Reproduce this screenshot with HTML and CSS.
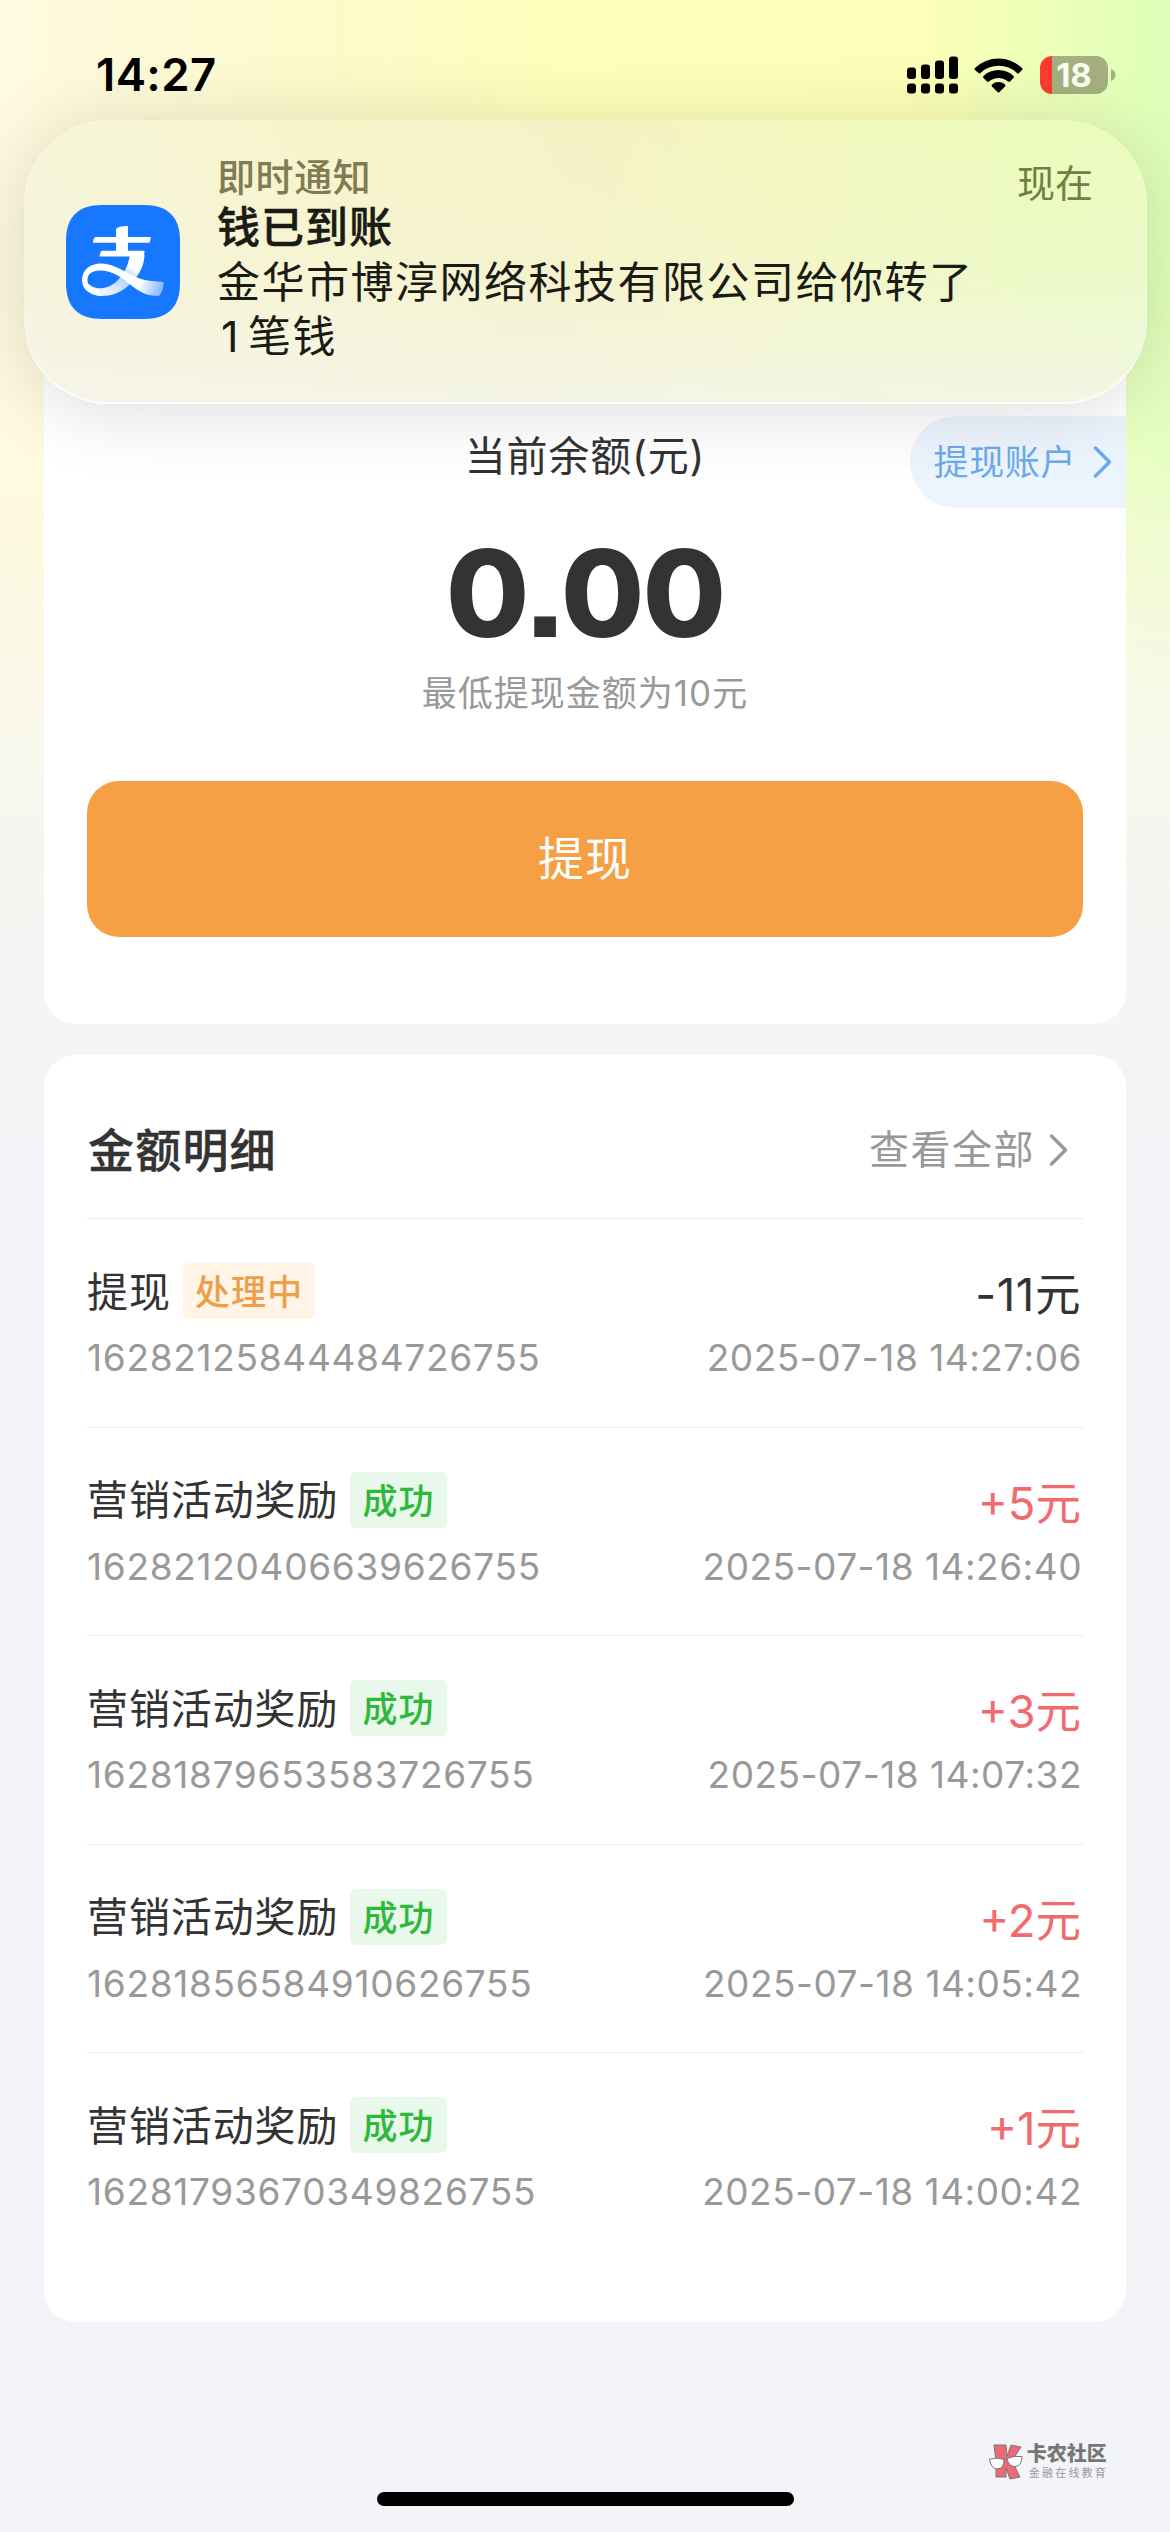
FILE: index.html
```html
<!DOCTYPE html>
<html lang="zh-CN">
<head>
<meta charset="utf-8">
<title>提现</title>
<link rel="stylesheet" href="styles.css">
</head>
<body>
<div class="screen">
  <header class="status-bar">
    <span class="clock">14:27</span>
    <div class="status-icons">
      <svg class="signal" width="52" height="38" viewBox="0 0 52 38">
        <rect x="0" y="11.5" width="9" height="11.5" rx="3"/><rect x="14" y="8.5" width="9" height="14.5" rx="3"/><rect x="28" y="4.5" width="9" height="18.5" rx="3"/><rect x="42" y="0.5" width="9" height="22.5" rx="3"/>
        <rect x="0" y="27.5" width="9" height="10" rx="3"/><rect x="14" y="27.5" width="9" height="10" rx="3"/><rect x="28" y="27.5" width="9" height="10" rx="3"/><rect x="42" y="27.5" width="9" height="10" rx="3"/>
      </svg>
      <svg class="wifi" width="50" height="36" viewBox="0 0 50 36">
        <path d="M1 11 A34 34 0 0 1 48 11 Q49 12 48 13 L45 16 Q44 17 43 16 A26.5 26.5 0 0 0 6.5 16 Q5.5 17 4.5 16 L1 13 Q0 12 1 11 Z"/>
        <path d="M9.5 19 A22 22 0 0 1 39.5 19 Q40.5 20 39.5 21 L36 24.5 Q35 25 34 24.5 A14.5 14.5 0 0 0 15 24.5 Q14 25 13 24.5 L9.5 21 Q8.5 20 9.5 19 Z"/>
        <path d="M18 27.5 A10 10 0 0 1 31 27.5 Q32 28.5 31 29.5 L25.5 35 Q24.5 36 23.5 35 L18 29.5 Q17 28.5 18 27.5 Z"/>
      </svg>
      <div class="battery"><span class="battery-level">18</span></div>
      <svg class="battery-cap" width="5" height="12" viewBox="0 0 5 12"><path d="M0 0 Q4.5 2 4.5 6 Q4.5 10 0 12 Z"/></svg>
    </div>
  </header>

  <section class="notification">
    <svg class="app-icon" width="114" height="114" viewBox="0 0 114 114">
      <defs>
        <linearGradient id="stem" x1="72" y1="50" x2="45" y2="88" gradientUnits="userSpaceOnUse">
          <stop offset="0" stop-color="#fff"/><stop offset=".3" stop-color="#fff"/><stop offset=".52" stop-color="#a9cbff"/><stop offset="1" stop-color="#e9f2ff"/>
        </linearGradient>
        <linearGradient id="tail" x1="52" y1="65" x2="98" y2="84" gradientUnits="userSpaceOnUse">
          <stop offset="0" stop-color="#fff"/><stop offset=".5" stop-color="#fff"/><stop offset="1" stop-color="#7db2ff"/>
        </linearGradient>
      </defs>
      <path d="M36 0H78C102 0 114 12 114 36V78C114 102 102 114 78 114H36C12 114 0 102 0 78V36C0 12 12 0 36 0Z" fill="#1677ff"/>
      <path d="M64 50H78.5C78 63 71 73 62 81C54 88 45 91 35 91C28 90.5 22 87 19 82L23 79C30 86 43 84 51 76C58 69 62 61 64 50Z" fill="url(#stem)"/>
      <path d="M27 37.7Q27 33.5 29.5 32H50V25Q50 21 62 21V32H84.7Q84.5 37 83 37.7H62V45.7H78.5L78 51.5H33.5Q34 46.5 36 45.7H50V37.7Z" fill="#fff"/>
      <path d="M35 91C22 90 16 83 16 75C16 65 24 58.5 35 58.5C53 58.5 64 74 86 76L97.5 77Q98 85 93 91C73 91 67 80 54 72C48 68 41 65.5 34 65.5C26 65.5 21.5 69 21.5 75C21.5 81 26 84.5 32 84.5Z" fill="url(#tail)"/>
    </svg>
    <div class="notification-text">
      <p class="notification-app">即时通知</p>
      <p class="notification-title">钱已到账</p>
      <p class="notification-body">金华市博淳网络科技有限公司给你转了<br><span class="one">1</span>笔钱</p>
    </div>
    <span class="notification-time">现在</span>
  </section>

  <main class="content">
    <section class="card balance-card">
      <h2 class="balance-label">当前余额(元)</h2>
      <a class="account-link"><span class="link-text">提现账户</span>
        <svg class="chevron" width="20" height="34" viewBox="0 0 20 34"><path d="M2.5 3 16.5 17 2.5 31"/></svg>
      </a>
      <p class="balance-value">0.00</p>
      <p class="balance-hint">最低提现金额为10元</p>
      <button class="withdraw" type="button">提现</button>
    </section>

    <section class="card details-card">
      <div class="details-header">
        <h2 class="details-title">金额明细</h2>
        <a class="view-all"><span class="link-text">查看全部</span>
          <svg class="chevron" width="20" height="34" viewBox="0 0 20 34"><path d="M2.5 3 16.5 17 2.5 31"/></svg>
        </a>
      </div>
      <ul class="records">
        <li class="record">
          <div class="record-name"><span class="link-text">提现</span><span class="badge pending">处理中</span></div><div class="amount expense">-11元</div>
          <div class="meta">16282125844484726755</div><div class="meta date">2025-07-18 14:27:06</div>
        </li>
        <li class="record">
          <div class="record-name"><span class="link-text">营销活动奖励</span><span class="badge success">成功</span></div><div class="amount income">+5元</div>
          <div class="meta">16282120406639626755</div><div class="meta date">2025-07-18 14:26:40</div>
        </li>
        <li class="record">
          <div class="record-name"><span class="link-text">营销活动奖励</span><span class="badge success">成功</span></div><div class="amount income">+3元</div>
          <div class="meta">16281879653583726755</div><div class="meta date">2025-07-18 14:07:32</div>
        </li>
        <li class="record">
          <div class="record-name"><span class="link-text">营销活动奖励</span><span class="badge success">成功</span></div><div class="amount income">+2元</div>
          <div class="meta">16281856584910626755</div><div class="meta date">2025-07-18 14:05:42</div>
        </li>
        <li class="record">
          <div class="record-name"><span class="link-text">营销活动奖励</span><span class="badge success">成功</span></div><div class="amount income">+1元</div>
          <div class="meta">16281793670349826755</div><div class="meta date">2025-07-18 14:00:42</div>
        </li>
      </ul>
    </section>
  </main>

  <footer class="footer">
    <div class="community">
      <svg class="community-logo" width="34" height="36" viewBox="0 0 34 36">
        <path d="M5 1H17L18 12L22 1L32 3L23 17L31 33L21 35L17 24V33H7V17Z" fill="#ec6a78" stroke="#777" stroke-width="1"/>
        <path d="M0.5 15Q8 13 15 15.5Q15 25 8 25Q1.5 24 0.5 15ZM18 14.5Q25 11.5 33 12.5Q33 21 27 22.5Q19.5 23 18 14.5ZM15 16Q16.5 14.5 18 15" fill="#fff" stroke="#777" stroke-width="1"/>
      </svg>
      <div class="community-text"><span class="community-name">卡农社区</span><span class="community-sub">金融在线教育</span></div>
    </div>
    <div class="home-indicator"></div>
  </footer>
</div>
</body>
</html>
```
FILE: styles.css
```css
* { box-sizing: border-box; margin: 0; padding: 0; }

body {
  width: 1170px;
  font-family: Inter, "Noto Sans CJK SC", sans-serif;
  color: #333;
}

.screen {
  position: relative;
  display: flex;
  flex-direction: column;
  width: 1170px;
  height: 2532px;
  overflow: hidden;
  background:
    linear-gradient(180deg, rgba(252, 250, 226, 0) 250px, rgba(252, 250, 226, .2) 440px, rgba(252, 250, 226, .6) 540px, rgba(249, 248, 232, .95) 680px, #f7f7ee 780px, #f5f5f2 900px, #f5f5f5 1010px, #f4f4f5 1110px, #f2f4f7 1150px),
    linear-gradient(90deg, #fff9e0 0, #fdfacb 28%, #feffba 48%, #fdffb8 78%, #e6ffb8 94%, #deffb8 100%);
}

.status-bar {
  display: flex;
  align-items: center;
  justify-content: space-between;
  flex: none;
  height: 150px;
  padding: 0 54px 0 96px;
  color: #000;
}
.clock { font-size: 45.5px; font-weight: 600; letter-spacing: .4px; line-height: 50px; }
.status-icons { display: flex; align-items: center; }
.signal { margin-right: 15px; }
.wifi { margin-right: 16px; }
.battery {
  display: flex;
  align-items: center;
  justify-content: center;
  width: 68px;
  height: 38px;
  border-radius: 12px;
  background: linear-gradient(90deg, #ff3b30 12px, #a4b07f 12px);
}
.battery-level { font-size: 33px; font-weight: 700; line-height: 38px; color: #fbfff0; }
.battery-cap { margin-left: 3px; fill: #a4b07f; }

/* Banner floating over the page */
.notification {
  position: absolute;
  z-index: 2;
  top: 120px;
  left: 24px;
  display: flex;
  width: 1123px;
  height: 284px;
  padding: 35px 54px 0 42px;
  border-radius: 84px;
  background:
    linear-gradient(180deg, rgba(245, 245, 240, 0) 0, rgba(245, 245, 238, .25) 55%, rgba(245, 245, 238, .82) 100%),
    linear-gradient(100deg, #f6f5d8 0, #f7f4cb 25%, #f4f2c4 48%, #f3f7bd 66%, #ebfbbb 88%, #e8fbbd 100%);
  box-shadow: 0 6px 76px rgba(0, 0, 0, .14), inset 0 -2px 1px rgba(255, 255, 255, .75), inset 0 0 2px rgba(255, 255, 255, .5);
}
.app-icon { flex: none; margin: 50px 37px 0 0; }
.notification-text { flex: 1; color: #1b1b16; }
.notification-app { font-size: 38px; font-weight: 500; line-height: 44px; letter-spacing: .6px; color: #817b54; }
.notification-title { font-size: 43px; font-weight: 500; line-height: 57px; letter-spacing: 1px; -webkit-text-stroke: .5px currentColor; }
.notification-body { font-size: 43px; line-height: 53.5px; letter-spacing: 1.5px; white-space: nowrap; }
.one { display: inline-block; padding: 0 8px 0 4px; }
.notification-time { font-size: 38px; line-height: 56px; color: #72803f; }

.content { display: flex; flex-direction: column; gap: 31px; flex: none; margin-top: 150px; padding: 0 44px; }
.card { border-radius: 32px; background: #fff; }

.balance-card {
  position: relative;
  display: flex;
  flex-direction: column;
  align-items: center;
  height: 724px;
  padding: 126px 43px 0;
}
.balance-label { font-size: 41px; font-weight: 400; line-height: 60px; letter-spacing: .8px; }
.account-link {
  position: absolute;
  top: 116px;
  right: 0;
  display: flex;
  align-items: center;
  gap: 17px;
  height: 92px;
  padding: 0 13px 0 24px;
  border-radius: 46px 0 0 46px;
  background: #ecf4fe;
  color: #6caaec;
  font-size: 35px;
  letter-spacing: .6px;
}
.link-text { padding-bottom: 5px; }
.chevron { flex: none; fill: none; stroke: currentColor; stroke-width: 3.5; stroke-linecap: round; stroke-linejoin: round; }
.balance-value { margin-top: 37px; font-size: 121px; font-weight: 800; line-height: 140px; letter-spacing: -2px; font-feature-settings: "ss07"; }
.balance-hint { margin-top: 5px; font-size: 35px; line-height: 50px; letter-spacing: 1px; color: #999; }
.withdraw {
  width: 996px;
  height: 156px;
  margin-top: 63px;
  padding-bottom: 9px;
  border: 0;
  border-radius: 32px;
  background: #f5a045;
  color: #fff;
  font: inherit;
  font-size: 46px;
  letter-spacing: 1px;
}

.details-card { padding: 0 43px 61px; }
.details-header { display: flex; align-items: center; justify-content: space-between; height: 163px; padding: 26px 14px 0 1px; }
.details-title { padding-bottom: 6px; font-size: 46px; font-weight: 500; letter-spacing: 1.2px; -webkit-text-stroke: .4px currentColor; }
.view-all { display: flex; align-items: center; gap: 14px; font-size: 40px; letter-spacing: 1.5px; color: #999; }

.records { list-style: none; }
.record {
  display: grid;
  grid-template: 56px 60px / auto auto;
  justify-content: space-between;
  row-gap: 9px;
  height: 208.6px;
  padding: 44px 2px 0 0;
  border-top: 1px solid #ececec;
}
.record-name { display: flex; align-items: center; gap: 12px; font-size: 41px; letter-spacing: .9px; }
.badge { height: 56px; padding: 1px 12px 0; border-radius: 6px; font-size: 35px; font-weight: 500; line-height: 56px; letter-spacing: 1.2px; }
.pending { background: #fff4e6; color: #eda04b; }
.success { background: #e8f8ea; color: #2fb93c; }
.amount { text-align: right; font-size: 45.5px; line-height: 63px; }
.expense { letter-spacing: .6px; }
.income { color: #f16b6d; }
.meta { font-size: 37px; line-height: 60px; letter-spacing: .7px; color: #999; }
.date { margin-right: -1px; text-align: right; letter-spacing: .5px; }

.footer { display: flex; flex-direction: column; align-items: center; flex: 1; padding: 122px 0 0; }
.community { display: flex; align-items: center; align-self: flex-end; gap: 4px; height: 36px; margin-right: 62px; }
.community-text { display: flex; flex-direction: column; gap: 3px; }
.community-name { font-size: 20px; font-weight: 800; line-height: 19px; color: #777; }
.community-sub { padding-left: 2px; font-size: 11px; line-height: 12px; letter-spacing: 2.2px; color: #999; }
.home-indicator { width: 417px; height: 14px; margin-top: 12px; border-radius: 7px; background: #000; }
```
